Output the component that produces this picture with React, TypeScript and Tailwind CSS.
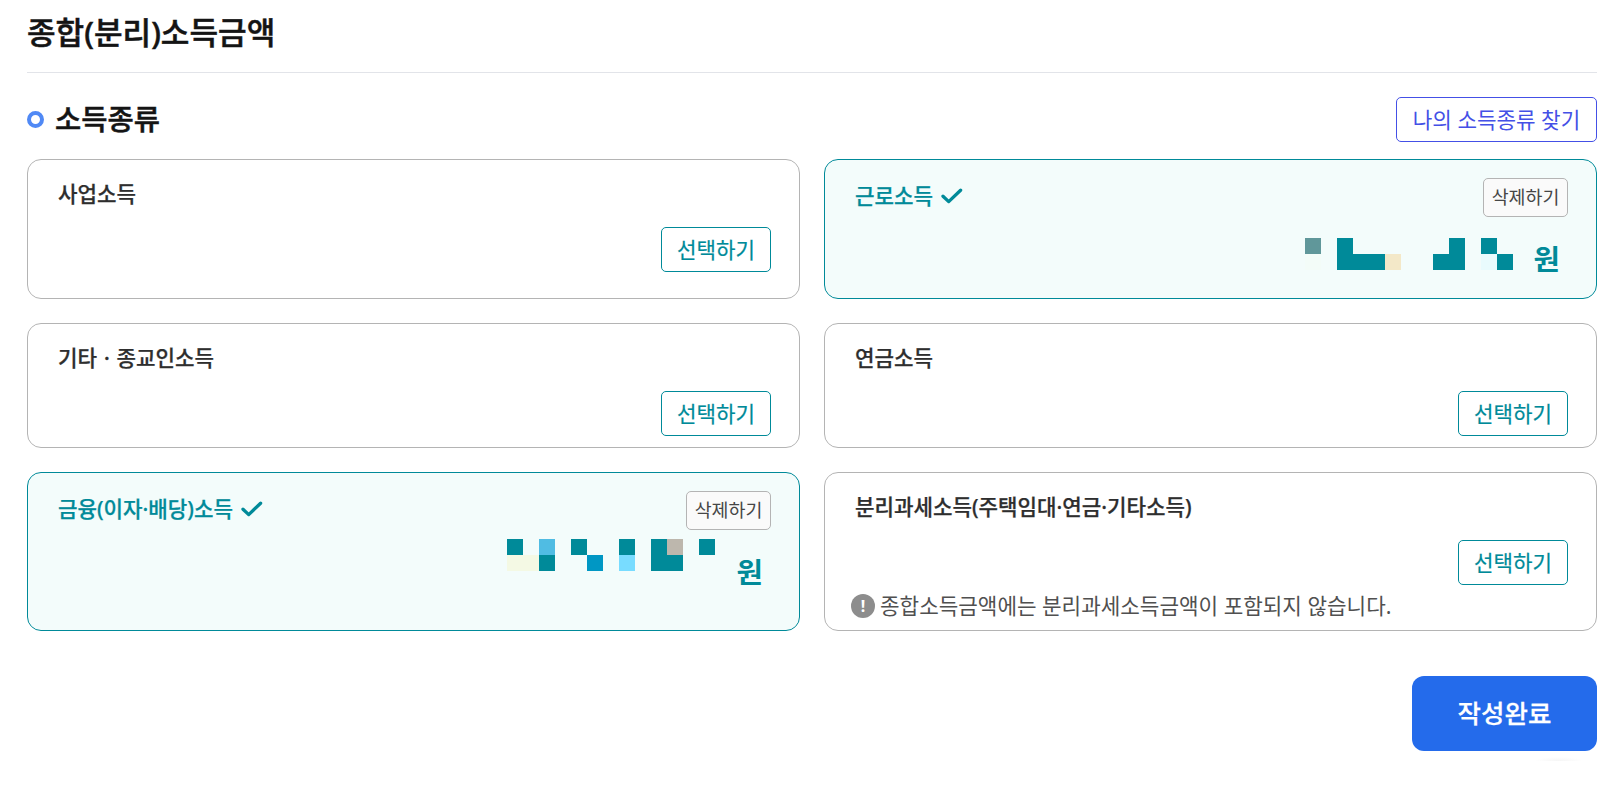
import clsx from "clsx";

// 모자이크 색상표 (. 은 빈 칸)
const MOSAIC_COLORS: Record<string, string> = {
  ".": "bg-transparent",
  T: "bg-[#008a99]",
  g: "bg-[#60979a]",
  f: "bg-[#f3fcf8]",
  s: "bg-[#f3e8c8]",
  p: "bg-[#e9fbfd]",
  y: "bg-[#f4f9e4]",
  b: "bg-[#50bce3]",
  d: "bg-[#0097c4]",
  l: "bg-[#78dcff]",
  w: "bg-[#bdb7ad]",
};

interface Income {
  id: number;
  label: string;
  mosaic?: string[];
  note?: string;
}

const incomes: Income[] = [
  { id: 1, label: "사업소득" },
  { id: 2, label: "근로소득", mosaic: ["g.T......T.T.", "f.TTTs..TT.pT"] },
  { id: 3, label: "기타ㆍ종교인소득" },
  { id: 4, label: "연금소득" },
  {
    id: 5,
    label: "금융(이자·배당)소득",
    mosaic: ["T.b.T..T.Tw.T", "yyT..d.l.TT.."],
  },
  {
    id: 6,
    label: "분리과세소득(주택임대·연금·기타소득)",
    note: "종합소득금액에는 분리과세소득금액이 포함되지 않습니다.",
  },
];

function Mosaic({ rows }: { rows: string[] }) {
  return (
    <div className="grid grid-cols-[repeat(13,16px)] auto-rows-[16px]">
      {rows
        .join("")
        .split("")
        .map((c, i) => (
          <span key={i} className={MOSAIC_COLORS[c]} />
        ))}
    </div>
  );
}

function CheckIcon() {
  return (
    <svg width="22" height="18" viewBox="0 0 22 18" fill="none">
      <path
        d="M2 9.2L7.7 14.6L19.6 3.2"
        stroke="#008a99"
        strokeWidth="3.3"
        strokeLinecap="round"
        strokeLinejoin="round"
      />
    </svg>
  );
}

function SelectedCard({ income }: { income: Income }) {
  return (
    <div className="flex flex-col rounded-[14px] border border-[#008a99] bg-[#f3fcfb] pt-[18px] pr-7 pl-[30px]">
      <div className="flex h-[39px] items-start justify-between">
        <div className="flex items-center gap-2 text-[#008a99]">
          <span className="text-[21.2px] leading-9 font-medium [-webkit-text-stroke:0.25px]">
            {income.label}
          </span>
          <CheckIcon />
        </div>
        <button className="h-[39px] w-[85px] rounded-[5px] border border-[#b4b4b4] bg-[#fafafa] text-[18.4px] leading-none text-[#464646]">
          삭제하기
        </button>
      </div>
      {/* 금액 */}
      <div
        className={clsx(
          "flex justify-end pr-2",
          income.id === 2 ? "mt-[21px] gap-[21px]" : "mt-[9px] gap-[22px]",
        )}
      >
        <Mosaic rows={income.mosaic ?? []} />
        <span
          className={clsx(
            "text-[28.75px] leading-10 font-bold text-[#008a99]",
            income.id === 2 ? "mt-px" : "mt-[13px]",
          )}
        >
          원
        </span>
      </div>
    </div>
  );
}

function EmptyCard({ income }: { income: Income }) {
  return (
    <div className="flex flex-col rounded-[14px] border border-[#b4b4b4] bg-white pt-4 pr-7 pl-[30px]">
      <span className="h-[51px] text-[21.2px] leading-9 font-medium text-[#2e2e2e] [-webkit-text-stroke:0.25px]">
        {income.label}
      </span>
      <button className="h-[45px] w-[110px] shrink-0 self-end rounded-[5px] border border-[#008a99] bg-white text-[21.2px] leading-none text-[#008a99] [-webkit-text-stroke:0.2px]">
        선택하기
      </button>
      {income.note && (
        <p className="mt-[3px] -ml-1 flex items-center gap-[5px] text-[21.28px] leading-9 text-[#505050]">
          <span className="flex size-6 items-center justify-center rounded-full bg-[#8d8d8d] text-[16px] leading-none font-bold text-white">
            !
          </span>
          {income.note}
        </p>
      )}
    </div>
  );
}

export default function App() {
  return (
    <main className="h-[807px] overflow-hidden bg-white pr-[19px] pl-[27px] font-['Noto_Sans','Noto_Sans_CJK_KR',sans-serif]">
      {/* 제목 */}
      <h1 className="h-[73px] border-b border-[#e2e4e9] pt-2 text-[31.1px] leading-[48px] font-medium text-[#141414] [-webkit-text-stroke:0.5px]">
        종합(분리)소득금액
      </h1>

      <div className="mt-6 flex h-[45px] items-center justify-between">
        <div className="flex items-center gap-[11px]">
          <span className="size-[17px] rounded-full border-4 border-[#5089f5]" />
          <h2 className="-mt-0.5 text-[28.5px] leading-10 font-medium text-[#141414] [-webkit-text-stroke:0.5px]">
            소득종류
          </h2>
        </div>
        <button className="h-[45px] w-[201px] rounded-[5px] border border-[#4450e6] text-[21.25px] leading-none text-[#4450e6]">
          나의 소득종류 찾기
        </button>
      </div>

      {/* 소득 목록 */}
      <div className="mt-[17px] grid grid-cols-2 grid-rows-[140px_125px_159px] gap-6">
        {incomes.map((income) =>
          income.mosaic ? (
            <SelectedCard key={income.id} income={income} />
          ) : (
            <EmptyCard key={income.id} income={income} />
          ),
        )}
      </div>

      <div className="mt-[45px] flex flex-col items-end">
        <button className="h-[75px] w-[185px] rounded-xl bg-[#246beb] text-[25.5px] leading-none font-medium text-white [-webkit-text-stroke:0.25px]">
          작성완료
        </button>
        {/* 버튼 아래 옅은 그림자 */}
        <div className="mt-[6px] mr-3.5 h-1 w-12 bg-[radial-gradient(24px_4px_at_50%_100%,#f5f5f5,#ffffff)]" />
      </div>
    </main>
  );
}
